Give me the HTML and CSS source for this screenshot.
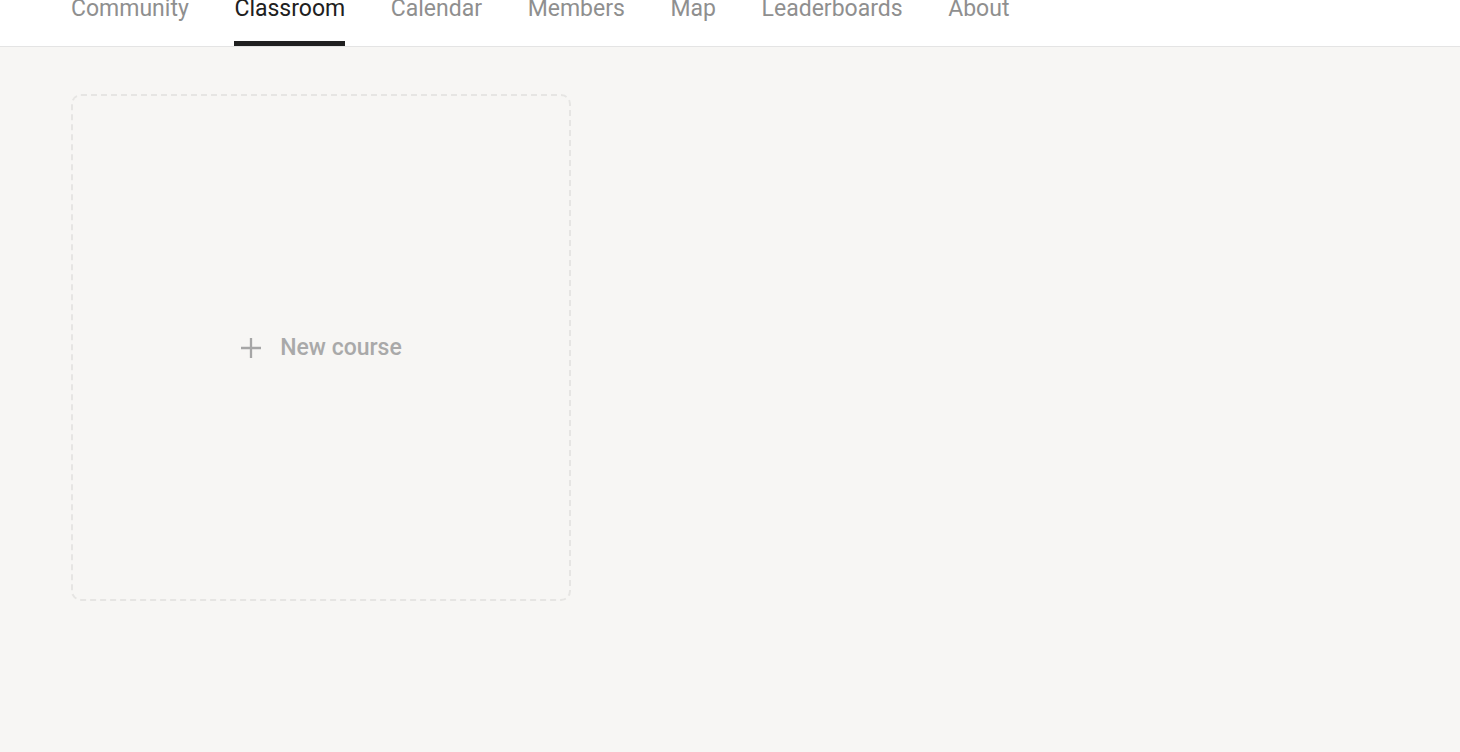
FILE: index.html
```html
<!DOCTYPE html>
<html lang="en">
<head>
<meta charset="utf-8">
<title>Classroom</title>
<link rel="stylesheet" href="styles.css">
</head>
<body>
<header class="header">
  <nav class="tabs">
    <a class="tab">Community</a>
    <a class="tab active">Classroom</a>
    <a class="tab">Calendar</a>
    <a class="tab">Members</a>
    <a class="tab">Map</a>
    <a class="tab">Leaderboards</a>
    <a class="tab">About</a>
  </nav>
</header>
<main class="main">
  <div class="grid">
    <button class="new-course">
      <svg class="plus" width="22" height="22" viewBox="0 0 22 22" aria-hidden="true">
        <path d="M11 1v20M1 11h20" stroke="currentColor" stroke-width="2.3" fill="none"/>
      </svg>
      <span>New course</span>
    </button>
  </div>
</main>
</body>
</html>
```

FILE: styles.css
```css
* { box-sizing: border-box; }
html, body { margin: 0; padding: 0; }
body {
  background: #f7f6f4;
  font-family: Roboto, "Liberation Sans", sans-serif;
  height: 752px;
  overflow: hidden;
}
.header {
  background: #ffffff;
  border-bottom: 1px solid #e4e4e4;
  height: 47px;
}
.tabs {
  display: flex;
  gap: 45.6px;
  padding-left: 71px;
  height: 46px;
}
.tab {
  display: flex;
  align-items: flex-start;
  margin-top: -5px;
  height: 51px;
  font-size: 23px;
  font-weight: 400;
  line-height: 28px;
  color: #8f8f8f;
  border-bottom: 5px solid transparent;
}
.tab.active {
  color: #202020;
  border-bottom-color: #202020;
}
.main {
  padding: 47px 71px;
}
.grid {
  display: flex;
}
.new-course {
  width: 500px;
  height: 507px;
  border: 2px dashed #e6e5e3;
  border-radius: 10px;
  background: transparent;
  display: flex;
  align-items: center;
  justify-content: center;
  gap: 18px;
  color: #a9a9a9;
  font-family: Roboto, "Liberation Sans", sans-serif;
  font-size: 23px;
  font-weight: 500;
  padding: 0;
}
.plus { color: #a6a6a6; }
```
